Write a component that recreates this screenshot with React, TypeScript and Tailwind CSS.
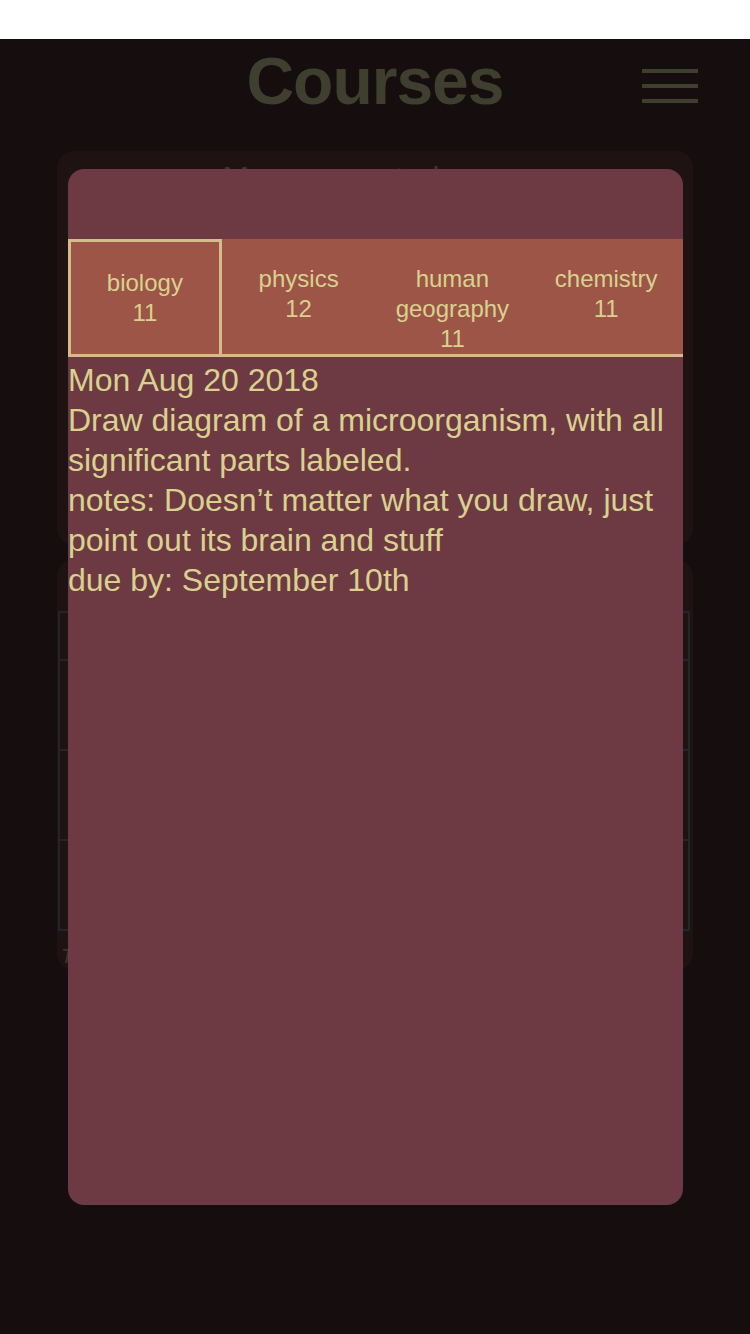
const tabs = [
  { name: 'biology', count: 11 },
  { name: 'physics', count: 12 },
  { name: 'human geography', count: 11 },
  { name: 'chemistry', count: 11 },
];

const rows = [46, 90, 90, 90];

export default function App() {
  const selected = 0;

  return (
    <div className="relative min-h-[1334px] bg-[#150d0e] font-['Liberation_Sans',Arial,sans-serif]">
      <div className="h-[39px] bg-white" />

      {/* page underneath the dialog */}
      <header className="relative flex h-[78px] items-center justify-center pt-[6px]">
        <h1 className="text-[66px] font-bold tracking-[-1px] text-[#3f3f2f]">Courses</h1>
        <div className="absolute right-[52px] top-[30px] flex w-[56px] flex-col gap-[11px]">
          <div className="h-[4px] bg-[#3f3f2f]" />
          <div className="h-[4px] bg-[#3f3f2f]" />
          <div className="h-[4px] bg-[#3f3f2f]" />
        </div>
      </header>

      <main className="flex flex-col gap-[15px] px-[57px] pt-[34px]">
        <section className="h-[394px] rounded-2xl bg-[#1f1213] pr-[54px] pt-[3px] text-center">
          <p className="text-[32px] text-[#3a3a2c]">My courses today</p>
        </section>

        <section className="flex h-[410px] flex-col rounded-2xl bg-[#1f1213] pt-[51px]">
          <div className="ml-[1px] mr-[3px] border-2 border-[#22262a]">
            {rows.map((h, i) => (
              <div
                key={i}
                className={i > 0 ? 'border-t-2 border-[#22262a]' : ''}
                style={{ height: h }}
              />
            ))}
          </div>
          <p className="pl-[4px] pt-[10px] text-[20px] italic text-[#3a3a2c]">T</p>
        </section>
      </main>

      {/* dialog */}
      <div className="absolute left-[68px] top-[169px] flex h-[1036px] w-[615px] flex-col rounded-2xl bg-[#6d3a43] pt-[70px] text-[#d9d18e]">
        <div className="flex border-b-[3px] border-[#d5bd8a] bg-[#9c5547]">
          {tabs.map((t, i) => (
            <div
              key={t.name}
              className={
                i === selected
                  ? 'flex w-1/4 flex-col items-center border-[3px] border-b-0 border-[#d5bd8a] px-1 pt-[26px] text-center text-[24px] leading-[30px]'
                  : 'flex w-1/4 flex-col items-center px-1 pt-[25px] text-center text-[24px] leading-[30px]'
              }
            >
              <span>{t.name}</span>
              <span>{t.count}</span>
            </div>
          ))}
        </div>
        <div className="pt-[3px] text-[32px] leading-[40px]">
          <p>Mon Aug 20 2018</p>
          <p>Draw diagram of a microorganism, with all significant parts labeled.</p>
          <p>notes: Doesn’t matter what you draw, just point out its brain and stuff</p>
          <p>due by: September 10th</p>
        </div>
      </div>
    </div>
  );
}
